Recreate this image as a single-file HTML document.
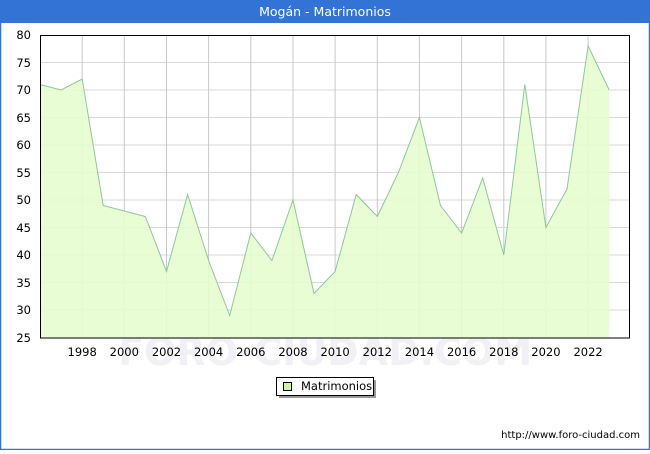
<!DOCTYPE html>
<html><head><meta charset="utf-8"><style>
body{margin:0;width:650px;height:450px;overflow:hidden;background:#fff;font-family:"DejaVu Sans","Liberation Sans",sans-serif;}
</style></head><body>
<svg width="650" height="450" xmlns="http://www.w3.org/2000/svg" font-family="DejaVu Sans, Liberation Sans, sans-serif">
<rect x="0" y="0" width="650" height="450" fill="#fff"/>
<rect x="0.5" y="0.5" width="649" height="449" fill="none" stroke="#3373d6" stroke-width="1.5"/>
<rect x="0" y="0" width="650" height="23" fill="#3373d6"/>
<text x="325" y="16" fill="#fff" font-size="12.5" text-anchor="middle">Mogán - Matrimonios</text>
<text x="325" y="365" fill="#f0f0f6" font-size="38" text-anchor="middle" font-weight="bold">FORO-CIUDAD.COM</text>
<g stroke="#d8d8d8" stroke-width="1">
<line x1="40" y1="62.5" x2="630" y2="62.5"/><line x1="40" y1="90" x2="630" y2="90"/><line x1="40" y1="117.5" x2="630" y2="117.5"/><line x1="40" y1="145" x2="630" y2="145"/><line x1="40" y1="172.5" x2="630" y2="172.5"/><line x1="40" y1="200" x2="630" y2="200"/><line x1="40" y1="227.5" x2="630" y2="227.5"/><line x1="40" y1="255" x2="630" y2="255"/><line x1="40" y1="282.5" x2="630" y2="282.5"/><line x1="40" y1="310" x2="630" y2="310"/>
</g>
<g stroke="#c8c8c8" stroke-width="1">
<line x1="82.2" y1="35" x2="82.2" y2="338"/><line x1="124.3" y1="35" x2="124.3" y2="338"/><line x1="166.5" y1="35" x2="166.5" y2="338"/><line x1="208.6" y1="35" x2="208.6" y2="338"/><line x1="250.8" y1="35" x2="250.8" y2="338"/><line x1="293" y1="35" x2="293" y2="338"/><line x1="335.1" y1="35" x2="335.1" y2="338"/><line x1="377.3" y1="35" x2="377.3" y2="338"/><line x1="419.4" y1="35" x2="419.4" y2="338"/><line x1="461.6" y1="35" x2="461.6" y2="338"/><line x1="503.8" y1="35" x2="503.8" y2="338"/><line x1="545.9" y1="35" x2="545.9" y2="338"/><line x1="588.1" y1="35" x2="588.1" y2="338"/>
</g>
<polygon fill="#e5fdce" fill-opacity="0.9" stroke="none" points="40,338 40,84.5 61.1,90 82.2,79 103.2,205.5 124.3,211 145.4,216.5 166.5,271.5 187.6,194.5 208.6,260.5 229.7,315.5 250.8,233 271.9,260.5 293,200 314,293.5 335.1,271.5 356.2,194.5 377.3,216.5 398.4,172.5 419.4,117.5 440.5,205.5 461.6,233 482.7,178 503.8,255 524.8,84.5 545.9,227.5 567,189 588.1,46 609.2,90 609.2,338"/>
<polyline fill="none" stroke="#8cc89a" stroke-width="1" points="40,84.5 61.1,90 82.2,79 103.2,205.5 124.3,211 145.4,216.5 166.5,271.5 187.6,194.5 208.6,260.5 229.7,315.5 250.8,233 271.9,260.5 293,200 314,293.5 335.1,271.5 356.2,194.5 377.3,216.5 398.4,172.5 419.4,117.5 440.5,205.5 461.6,233 482.7,178 503.8,255 524.8,84.5 545.9,227.5 567,189 588.1,46 609.2,90"/>
<rect x="40.5" y="35.5" width="589" height="302.5" fill="none" stroke="#000" stroke-width="1"/>
<g font-size="11.5" fill="#000" text-anchor="end">
<text x="31" y="39">80</text><text x="31" y="67">75</text><text x="31" y="94">70</text><text x="31" y="122">65</text><text x="31" y="149">60</text><text x="31" y="177">55</text><text x="31" y="204">50</text><text x="31" y="232">45</text><text x="31" y="259">40</text><text x="31" y="287">35</text><text x="31" y="314">30</text><text x="31" y="342">25</text>
</g>
<g font-size="11.5" fill="#000" text-anchor="middle">
<text x="82.2" y="356">1998</text><text x="124.3" y="356">2000</text><text x="166.5" y="356">2002</text><text x="208.6" y="356">2004</text><text x="250.8" y="356">2006</text><text x="293" y="356">2008</text><text x="335.1" y="356">2010</text><text x="377.3" y="356">2012</text><text x="419.4" y="356">2014</text><text x="461.6" y="356">2016</text><text x="503.8" y="356">2018</text><text x="545.9" y="356">2020</text><text x="588.1" y="356">2022</text>
</g>
<rect x="279" y="380" width="97" height="18" fill="#999"/>
<rect x="276.5" y="377.5" width="97" height="18" fill="#fff" stroke="#000" stroke-width="1"/>
<rect x="283.5" y="382.5" width="8" height="8" fill="#ccf5a0" stroke="#000" stroke-width="1"/>
<text x="301" y="390" font-size="11.5" fill="#000">Matrimonios</text>
<text x="640" y="438" font-size="10" fill="#000" text-anchor="end">http://www.foro-ciudad.com</text>
</svg>
</body></html>
